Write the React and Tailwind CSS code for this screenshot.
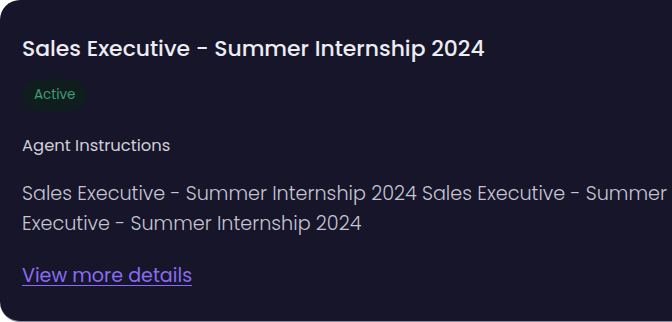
const FONT = { fontFamily: '"Poppins", "DejaVu Sans", "Noto Sans", sans-serif' };

const App = () => {
  return (
    <div className="w-[672px] h-[322px] bg-white overflow-hidden" style={FONT}>
      <div className="w-[900px] h-[322px] bg-[#16152a] rounded-l-[20px] border-b border-[#8d8b9e] px-[22px] pt-[34px]">
        <h1 className="text-[21.9px] font-medium leading-[30px] text-[#ececf2]">
          Sales Executive - Summer Internship 2024
        </h1>

        <div className="mt-[15px]">
          <span className="inline-flex items-center h-[32px] px-[12px] rounded-full bg-[#0f1d1f] text-[13.5px] text-[#3e9e70]">
            Active
          </span>
        </div>

        <div className="mt-[23px] text-[16.4px] leading-[24px] text-[#cfcfd8]">
          Agent Instructions
        </div>

        <div className="mt-[21px] text-[19.2px] font-light leading-[30px] text-[#c6c5d2]">
          <div className="whitespace-nowrap">
            Sales Executive - Summer Internship 2024 Sales Executive - Summer Internship 2024 Sales
          </div>
          <div className="whitespace-nowrap">Executive - Summer Internship 2024</div>
        </div>

        <a
          href="#"
          className="inline-block mt-[23px] text-[19.1px] leading-[28px] text-[#8a6cf2] underline underline-offset-[3px]"
        >
          View more details
        </a>
      </div>
    </div>
  );
};

export default App;
